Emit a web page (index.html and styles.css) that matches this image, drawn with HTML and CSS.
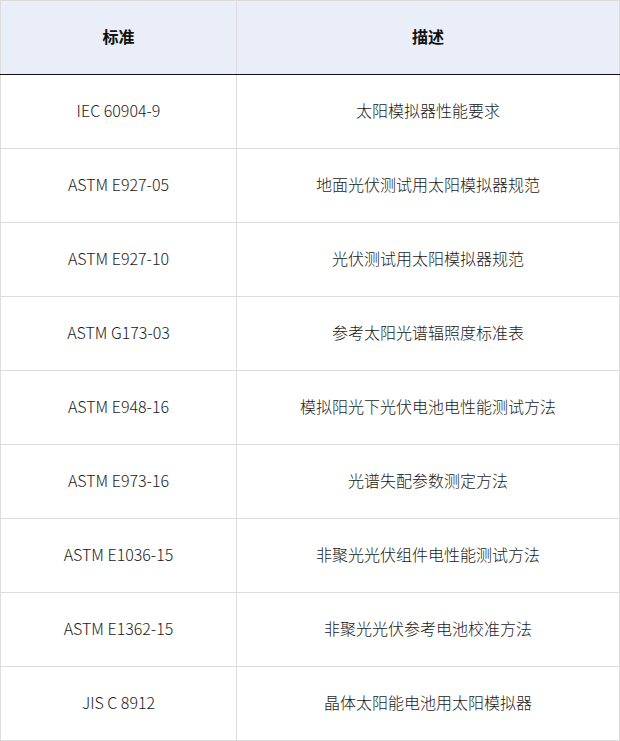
FILE: index.html
```html
<!DOCTYPE html>
<html lang="zh">
<head>
<meta charset="utf-8">
<link rel="stylesheet" href="styles.css">
</head>
<body>
<table class="std-table">
  <thead>
    <tr><th class="col-std">标准</th><th>描述</th></tr>
  </thead>
  <tbody>
    <tr><td>IEC 60904-9</td><td>太阳模拟器性能要求</td></tr>
    <tr><td>ASTM E927-05</td><td>地面光伏测试用太阳模拟器规范</td></tr>
    <tr><td>ASTM E927-10</td><td>光伏测试用太阳模拟器规范</td></tr>
    <tr><td>ASTM G173-03</td><td>参考太阳光谱辐照度标准表</td></tr>
    <tr><td>ASTM E948-16</td><td>模拟阳光下光伏电池电性能测试方法</td></tr>
    <tr><td>ASTM E973-16</td><td>光谱失配参数测定方法</td></tr>
    <tr><td>ASTM E1036-15</td><td>非聚光光伏组件电性能测试方法</td></tr>
    <tr><td>ASTM E1362-15</td><td>非聚光光伏参考电池校准方法</td></tr>
    <tr><td>JIS C 8912</td><td>晶体太阳能电池用太阳模拟器</td></tr>
  </tbody>
</table>
</body>
</html>
```
FILE: styles.css
```css
html, body {
  margin: 0;
  padding: 0;
  background: #ffffff;
}
body {
  font-family: "Noto Sans CJK SC", "Noto Sans", sans-serif;
  font-size: 16px;
  font-weight: 300;
  color: #1a1a1a;
}
.std-table {
  width: 620px;
  border-collapse: collapse;
  table-layout: fixed;
}
.std-table th,
.std-table td {
  border: 1px solid #dcdcdc;
  height: 69px;
  padding: 0 0 4px 0;
  text-align: center;
  vertical-align: middle;
  line-height: 22px;
}
.std-table .col-std {
  width: 235px;
}
.std-table th {
  background: #eaeef8;
  font-weight: 700;
  color: #111111;
  border-bottom: 1px solid #111111;
}
```
